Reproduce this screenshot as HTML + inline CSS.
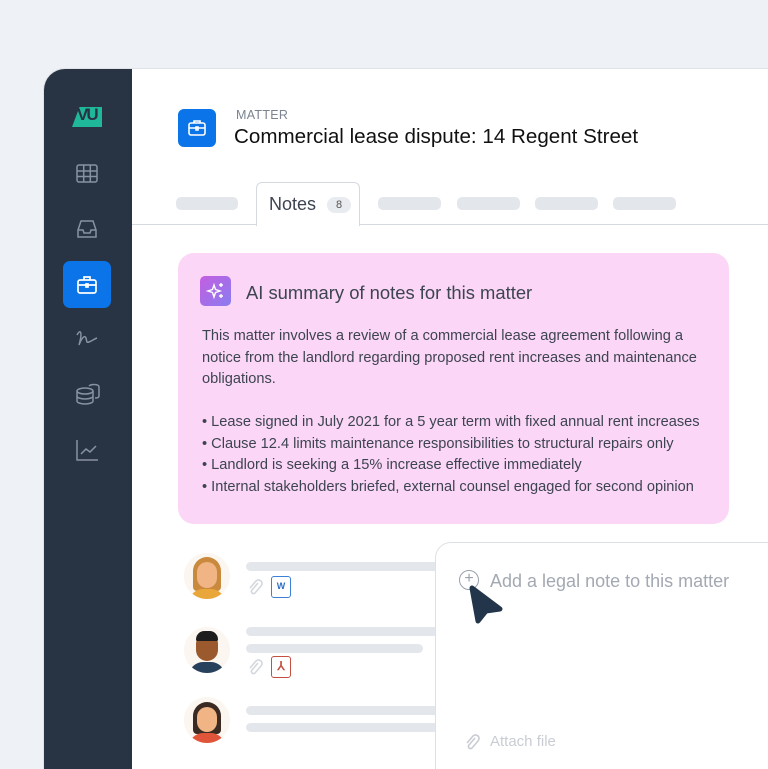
<!DOCTYPE html>
<html><head><meta charset="utf-8"><style>
*{margin:0;padding:0;box-sizing:border-box}
html,body{width:768px;height:769px;overflow:hidden}
body{background:#eef2f6;font-family:"Liberation Sans",sans-serif;position:relative}
.card{position:absolute;left:43px;top:68px;width:740px;height:701px;background:#fff;border-radius:22px 0 0 0;border:1px solid #dfe3e8;border-bottom:none;overflow:hidden}
.side{position:absolute;left:0;top:0;width:88px;height:100%;background:#283443}
.ab{position:absolute}
.bar{position:absolute;height:9px;border-radius:5px;background:#e3e7ec}
.pink{position:absolute;left:178px;top:253px;width:551px;height:271px;background:#fbd6f6;border-radius:16px}
.pink p,.pink li{font-size:14.6px;color:#3d4451;line-height:21.7px}
.pink ul{list-style:none}
.pink li:before{content:"• ";}
.comp{position:absolute;left:435px;top:542px;width:340px;height:240px;background:#fff;border:1px solid #dde1e6;border-radius:16px 0 0 0}
.av{position:absolute;width:46px;height:46px;border-radius:50%;background:#fbf6f0;overflow:hidden}
</style></head><body>
<div class="card">
<div class="side">
 <div class="ab" style="left:28px;top:38px;width:30px;height:20px;background:#1fb89a;clip-path:polygon(25% 0,100% 0,100% 100%,0 100%)"></div>
 <div class="ab" style="left:33px;top:36px;font:bold 17px 'Liberation Sans';color:#283443;letter-spacing:-2px">VU</div>
 <svg class="ab" style="left:31px;top:93px" width="24" height="24" fill="none" stroke="#8792a2" stroke-width="1.5"><rect x="2" y="3" width="20" height="17" rx="2"/><path d="M2 9h20M2 14.5h20M8.7 3v17M15.3 3v17"/></svg>
 <svg class="ab" style="left:31px;top:148px" width="24" height="24" fill="none" stroke="#8792a2" stroke-width="1.5"><path d="M3 13l3-9h12l3 9v7H3z M3 13h5l1 3h6l1-3h5"/></svg>
 <div class="ab" style="left:19px;top:192px;width:48px;height:47px;background:#0b74e8;border-radius:7px"></div>
 <svg class="ab" style="left:31px;top:204px" width="24" height="24" fill="none" stroke="#fff" stroke-width="1.7"><rect x="3" y="7" width="18" height="13" rx="2"/><path d="M9 7V4h6v3M3 12h18M11 11h2v3h-2z"/></svg>
 <svg class="ab" style="left:30px;top:258px" width="26" height="22" fill="none" stroke="#8792a2" stroke-width="1.5"><path d="M3 8c3-6 6-4 2 10 3-8 6-10 7-7s0 5 3 4 5-3 8-4"/></svg>
 <svg class="ab" style="left:30px;top:313px" width="26" height="26" fill="none" stroke="#8792a2" stroke-width="1.5"><ellipse cx="11" cy="9" rx="8" ry="3"/><path d="M3 9v10c0 1.7 3.6 3 8 3s8-1.3 8-3V9M3 14c0 1.7 3.6 3 8 3s8-1.3 8-3"/><path d="M15 4c1-1 3-1.5 5-1.5 4 0 5 1 5 2.5v9c0 1-1 2-4 2"/></svg>
 <svg class="ab" style="left:30px;top:368px" width="26" height="26" fill="none" stroke="#8792a2" stroke-width="1.5"><path d="M3 3v20h21M7 17l5-5 4 3 6-6"/></svg>
</div>
<div class="ab" style="left:134px;top:40px;width:38px;height:38px;background:#0b74e8;border-radius:6px"></div>
<svg class="ab" style="left:142px;top:48px" width="22" height="22" fill="none" stroke="#fff" stroke-width="1.6"><rect x="3" y="6" width="16" height="12" rx="2"/><path d="M8 6V4h6v2M3 11h16M10 10h2v3h-2z"/></svg>
<div class="ab" style="left:192px;top:39px;font-size:12.5px;color:#7b8490;letter-spacing:.3px">MATTER</div>
<div class="ab" style="left:190px;top:56px;font-size:20.6px;color:#111">Commercial lease dispute: 14 Regent Street</div>
<div class="ab" style="left:88px;top:155px;width:700px;border-top:1px solid #d5dae0"></div>
<div class="ab" style="left:212px;top:113px;width:104px;height:44px;background:#fff;border:1px solid #d5dae0;border-bottom:none;border-radius:6px 6px 0 0"></div>
<div class="ab" style="left:225px;top:125px;font-size:18px;color:#3d4451">Notes</div>
<div class="ab" style="left:283px;top:128px;width:24px;height:16px;border-radius:8px;background:#e8ebef;font-size:11px;color:#555;text-align:center;line-height:16px">8</div>
<div class="bar" style="left:132px;top:128px;width:62px;height:13px"></div>
<div class="bar" style="left:334px;top:128px;width:63px;height:13px"></div>
<div class="bar" style="left:413px;top:128px;width:63px;height:13px"></div>
<div class="bar" style="left:491px;top:128px;width:63px;height:13px"></div>
<div class="bar" style="left:569px;top:128px;width:63px;height:13px"></div>
</div>
<div class="pink">
 <div class="ab" style="left:22px;top:23px;width:31px;height:30px;border-radius:5px;background:linear-gradient(135deg,#c35ee0,#8a7cf0)"></div>
 <svg class="ab" style="left:28px;top:28px" width="20" height="20" fill="none" stroke="#fff" stroke-width="1.4"><path d="M8 4l1.5 4.5L14 10l-4.5 1.5L8 16l-1.5-4.5L2 10l4.5-1.5z M15 2v4M13 4h4M15 13v4M13 15h4"/></svg>
 <div class="ab" style="left:68px;top:29px;font-size:18.4px;color:#3d4451">AI summary of notes for this matter</div>
 <div class="ab" style="left:24px;top:73px;width:500px">
 <p>This matter involves a review of a commercial lease agreement following a notice from the landlord regarding proposed rent increases and maintenance obligations.</p><br>
 </div>
 <ul class="ab" style="left:24px;top:159px;width:530px"><li>Lease signed in July 2021 for a 5 year term with fixed annual rent increases</li><li>Clause 12.4 limits maintenance responsibilities to structural repairs only</li><li>Landlord is seeking a 15% increase effective immediately</li><li>Internal stakeholders briefed, external counsel engaged for second opinion</li></ul>
</div>
<div class="av" style="left:184px;top:553px"><div class="ab" style="left:9px;top:4px;width:28px;height:34px;background:#c98a3d;border-radius:14px 14px 4px 4px"></div><div class="ab" style="left:13px;top:9px;width:20px;height:26px;background:#f0b485;border-radius:10px"></div><div class="ab" style="left:5px;top:36px;width:36px;height:14px;background:#e9a63a;border-radius:18px 18px 0 0"></div></div>
<div class="av" style="left:184px;top:627px"><div class="ab" style="left:12px;top:6px;width:22px;height:28px;background:#9b5a2e;border-radius:11px"></div><div class="ab" style="left:12px;top:4px;width:22px;height:10px;background:#1d1d1d;border-radius:10px 10px 2px 2px"></div><div class="ab" style="left:5px;top:35px;width:36px;height:14px;background:#27415c;border-radius:18px 18px 0 0"></div></div>
<div class="av" style="left:184px;top:697px"><div class="ab" style="left:9px;top:5px;width:28px;height:32px;background:#3a2a22;border-radius:14px 14px 4px 4px"></div><div class="ab" style="left:13px;top:10px;width:20px;height:25px;background:#f0b485;border-radius:10px"></div><div class="ab" style="left:5px;top:36px;width:36px;height:14px;background:#e0553a;border-radius:18px 18px 0 0"></div></div>
<div class="bar" style="left:246px;top:562px;width:200px"></div>
<div class="bar" style="left:246px;top:627px;width:200px"></div>
<div class="bar" style="left:246px;top:644px;width:177px"></div>
<div class="bar" style="left:246px;top:706px;width:200px"></div>
<div class="bar" style="left:246px;top:723px;width:200px"></div>
<svg class="ab" style="left:247px;top:578px" width="16" height="18" fill="none" stroke="#d4d8de" stroke-width="1.6"><path d="M11 5l-6 7a2 2 0 003 3l6-7a3.5 3.5 0 00-5-5l-6 7"/></svg>
<div class="ab" style="left:271px;top:576px;width:20px;height:22px;border:1.5px solid #3b82d6;border-radius:3px;color:#2d6fc4;font:bold 9px 'Liberation Sans';text-align:center;line-height:19px">W</div>
<svg class="ab" style="left:247px;top:658px" width="16" height="18" fill="none" stroke="#d4d8de" stroke-width="1.6"><path d="M11 5l-6 7a2 2 0 003 3l6-7a3.5 3.5 0 00-5-5l-6 7"/></svg>
<div class="ab" style="left:271px;top:656px;width:20px;height:22px;border:1.5px solid #c5503f;border-radius:3px;color:#c5503f;font:bold 12px 'Liberation Sans';text-align:center;line-height:19px">⅄</div>
<div class="comp">
 <div class="ab" style="left:23px;top:27px;width:20px;height:20px;border:1.5px solid #9aa1ab;border-radius:50%;color:#9aa1ab;text-align:center;line-height:16px;font-size:16px">+</div>
 <div class="ab" style="left:54px;top:28px;font-size:18px;color:#a3a9b2">Add a legal note to this matter</div>
 <svg class="ab" style="left:32px;top:40px" width="36" height="42"><path d="M4 5 L32 26 L18 28 L10 38 Z" fill="#23354a" stroke="#23354a" stroke-width="5" stroke-linejoin="round"/></svg>
 <svg class="ab" style="left:27px;top:190px" width="18" height="20" fill="none" stroke="#c9cdd3" stroke-width="1.6"><path d="M12 5l-6 7a2 2 0 003 3l6-7a3.5 3.5 0 00-5-5l-6 7"/></svg>
 <div class="ab" style="left:54px;top:190px;font-size:15px;color:#c9cdd3">Attach file</div>
</div>
</body></html>
